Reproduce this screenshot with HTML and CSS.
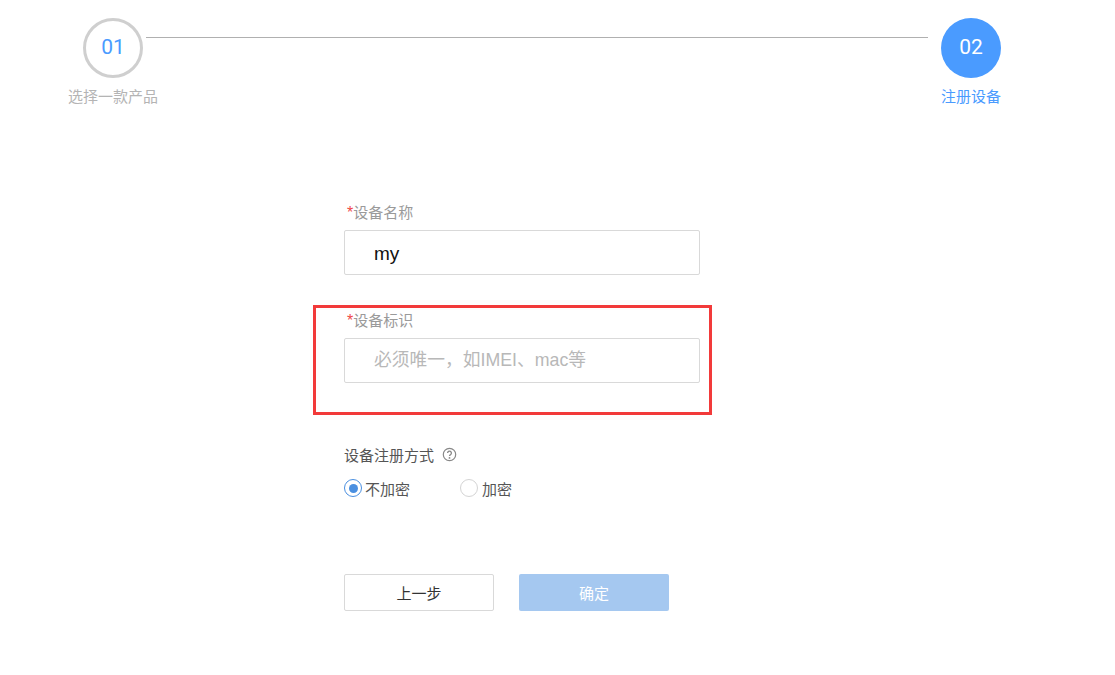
FILE: index.html
```html
<!DOCTYPE html>
<html lang="zh-CN">
<head>
<meta charset="utf-8">
<title>注册设备</title>
<link rel="stylesheet" href="styles.css">
</head>
<body>
<div class="stepper">
  <div class="step step-first">
    <div class="circle circle-done">01</div>
    <div class="step-label">选择一款产品</div>
  </div>
  <div class="connector"></div>
  <div class="step step-last">
    <div class="circle circle-active">02</div>
    <div class="step-label step-label-active">注册设备</div>
  </div>
</div>
<form class="form">
  <div class="highlight"></div>
  <div class="field">
    <label class="field-label"><span class="req">*</span>设备名称</label>
    <div class="input input-value">my</div>
  </div>
  <div class="field field-second">
    <label class="field-label"><span class="req">*</span>设备标识</label>
    <div class="input input-placeholder">必须唯一，如IMEI、mac等</div>
  </div>
  <div class="method-title">
    <span>设备注册方式</span>
    <svg class="help" width="15" height="15" viewBox="0 0 15 15">
      <circle cx="7.5" cy="7.5" r="6.2" fill="none" stroke="#888" stroke-width="1.2"/>
      <path d="M5.6 6a1.9 1.9 0 1 1 2.9 1.6c-.7.4-1 .7-1 1.5" fill="none" stroke="#888" stroke-width="1.3"/>
      <circle cx="7.5" cy="10.9" r=".9" fill="#888"/>
    </svg>
  </div>
  <div class="radios">
    <div class="radio radio-first"><span class="dot dot-on"></span>不加密</div>
    <div class="radio"><span class="dot"></span>加密</div>
  </div>
  <div class="buttons">
    <div class="btn btn-back">上一步</div>
    <div class="btn btn-ok">确定</div>
  </div>
</form>
</body>
</html>
```
FILE: styles.css
```css
* { box-sizing: border-box; }
html, body { margin: 0; padding: 0; }
body {
  background: #fff;
  width: 1115px;
  height: 675px;
  overflow: hidden;
  font-family: "Liberation Sans", "Noto Sans CJK SC", sans-serif;
}
.stepper {
  display: flex;
  align-items: flex-start;
  padding: 18px 0 0 68px;
}
.step {
  display: flex;
  flex-direction: column;
  align-items: center;
}
.step-first { width: 90px; }
.step-last { width: 62px; margin-left: 12px; }
.circle {
  width: 60px;
  height: 60px;
  border-radius: 50%;
  display: flex;
  align-items: center;
  justify-content: center;
  padding-bottom: 2px;
  font-family: Roboto, "Liberation Sans", sans-serif;
  font-size: 21px;
}
.circle-done { border: 3.5px solid #cfcfcf; color: #4a9bff; }
.circle-active { background: #4a9bff; color: #fff; }
.step-label {
  margin-top: 8px;
  font-size: 15px;
  line-height: 22px;
  color: #b4b4b4;
  white-space: nowrap;
}
.step-label-active { color: #4a9bff; }
.connector {
  width: 782px;
  height: 1px;
  background: #b0b0b0;
  margin: 19px 0 0 -12px;
}
.form {
  position: relative;
  width: 356px;
  margin: 94px 0 0 344px;
}
.highlight {
  position: absolute;
  left: -31px;
  top: 103px;
  width: 399px;
  height: 110px;
  border: 3px solid #f23a3a;
}
.field { display: flex; flex-direction: column; }
.field-second { margin-top: 35px; }
.field-label {
  height: 22px;
  line-height: 22px;
  margin-left: 3px;
  margin-bottom: 6px;
  font-size: 15px;
  color: #9a9a9a;
}
.req { color: #f04848; font-size: 16px; }
.input {
  height: 45px;
  line-height: 43px;
  border: 1px solid #d9d9d9;
  border-radius: 2px;
  padding-left: 29px;
  font-size: 18px;
}
.input-value { color: #111; font-size: 19px; line-height: 45px; }
.input-placeholder { color: #b8b8b8; font-size: 17.75px; }
.method-title {
  display: flex;
  align-items: center;
  gap: 8px;
  margin-top: 60px;
  height: 22px;
  font-size: 15px;
  color: #555;
}
.help { display: block; margin-top: 1px; }
.radios {
  display: flex;
  align-items: center;
  margin-top: 12px;
  height: 22px;
  font-size: 15px;
  color: #555;
}
.radio { display: flex; align-items: center; gap: 4px; }
.radio-first { width: 116px; gap: 3px; }
.dot {
  width: 18px;
  height: 18px;
  border-radius: 50%;
  border: 1px solid #d4d4d4;
  display: flex;
  align-items: center;
  justify-content: center;
}
.dot-on { border-color: #4a8fe0; }
.dot-on::after {
  content: "";
  width: 9px;
  height: 9px;
  border-radius: 50%;
  background: #4a8fe0;
}
.buttons {
  display: flex;
  gap: 25px;
  margin-top: 75px;
}
.btn {
  width: 150px;
  height: 37px;
  display: flex;
  align-items: center;
  justify-content: center;
  border-radius: 2px;
  font-size: 15px;
}
.btn-back { border: 1px solid #d9d9d9; color: #333; }
.btn-ok { background: #a5c8f0; color: #fff; }
```
